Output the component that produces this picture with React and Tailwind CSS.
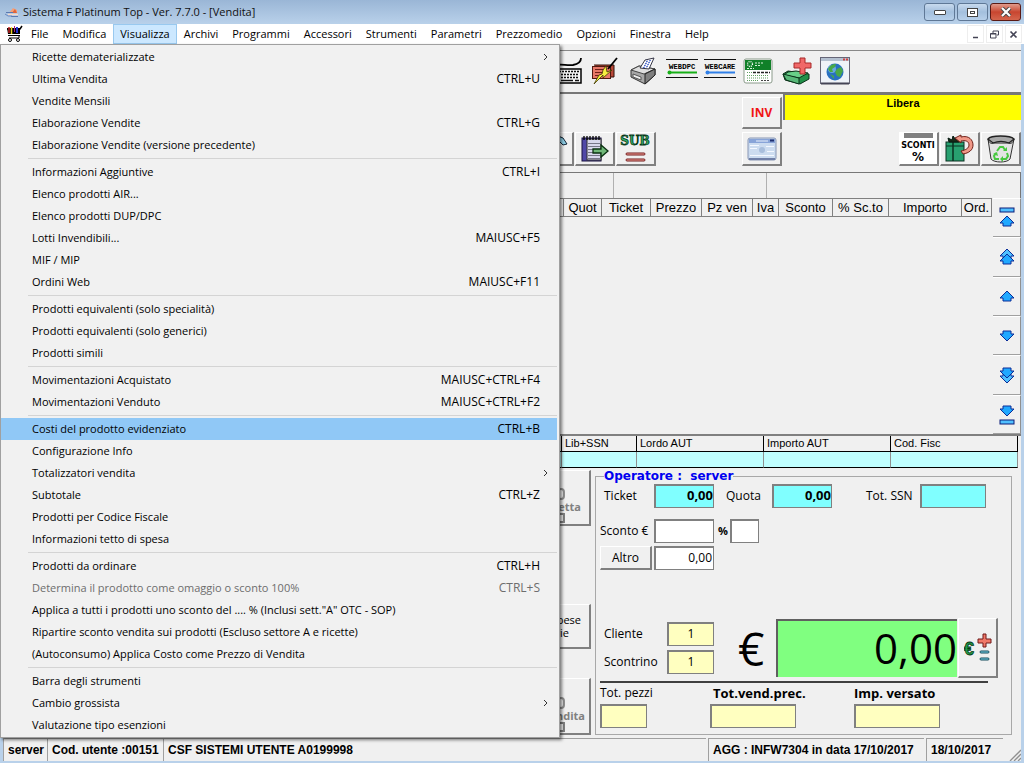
import { useState } from "react";
import clsx from "clsx";

const menuBar = [
    "File", "Modifica", "Visualizza", "Archivi", "Programmi", "Accessori",
    "Strumenti", "Parametri", "Prezzomedio", "Opzioni", "Finestra", "Help",
];

const menuGroups = [
    [
        { label: "Ricette dematerializzate", sub: true },
        { label: "Ultima Vendita", keys: "CTRL+U" },
        { label: "Vendite Mensili" },
        { label: "Elaborazione Vendite", keys: "CTRL+G" },
        { label: "Elaborazione Vendite (versione precedente)" },
    ],
    [
        { label: "Informazioni Aggiuntive", keys: "CTRL+I" },
        { label: "Elenco prodotti AIR..." },
        { label: "Elenco prodotti DUP/DPC" },
        { label: "Lotti Invendibili...", keys: "MAIUSC+F5" },
        { label: "MIF / MIP" },
        { label: "Ordini Web", keys: "MAIUSC+F11" },
    ],
    [
        { label: "Prodotti equivalenti (solo specialità)" },
        { label: "Prodotti equivalenti (solo generici)" },
        { label: "Prodotti simili" },
    ],
    [
        { label: "Movimentazioni Acquistato", keys: "MAIUSC+CTRL+F4" },
        { label: "Movimentazioni Venduto", keys: "MAIUSC+CTRL+F2" },
    ],
    [
        { label: "Costi del prodotto evidenziato", keys: "CTRL+B" },
        { label: "Configurazione Info" },
        { label: "Totalizzatori vendita", sub: true },
        { label: "Subtotale", keys: "CTRL+Z" },
        { label: "Prodotti per Codice Fiscale" },
        { label: "Informazioni tetto di spesa" },
    ],
    [
        { label: "Prodotti da ordinare", keys: "CTRL+H" },
        { label: "Determina il prodotto come omaggio o sconto 100%", keys: "CTRL+S", disabled: true },
        { label: 'Applica a tutti i prodotti uno sconto del .... % (Inclusi sett."A" OTC - SOP)' },
        { label: "Ripartire sconto vendita sui prodotti (Escluso settore A e ricette)" },
        { label: "(Autoconsumo) Applica Costo come Prezzo di Vendita" },
    ],
    [
        { label: "Barra degli strumenti" },
        { label: "Cambio grossista", sub: true },
        { label: "Valutazione tipo esenzioni" },
    ],
];

const saleColumns = [
    { label: "Quot", width: "w-[38px]" },
    { label: "Ticket", width: "w-[49px]" },
    { label: "Prezzo", width: "w-[51px]" },
    { label: "Pz ven", width: "w-[51px]" },
    { label: "Iva", width: "w-[26px]" },
    { label: "Sconto", width: "w-[54px]" },
    { label: "% Sc.to", width: "w-[56px]" },
    { label: "Importo", width: "w-[73px]" },
    { label: "Ord.", width: "w-[30px]" },
];

const raised =
    "border-t border-l border-r-2 border-b-2 border-t-white border-l-white border-r-[#808080] border-b-[#808080] bg-[#f0f0f0]";

/* ==================== ICONS ==================== */

function AppIcon() {
    return (
        <svg width="16" height="16" viewBox="0 0 16 16">
            <path d="M5 9 L9 4 L13 6 L13 9 Z" fill="#f4a078" />
            <path d="M8 9 L11 5 L13 9 Z" fill="#e0643a" />
            <path d="M2 8.500 H9 M7 12.500 H14" stroke="#5a78b0" />
            <path d="M4 10.500 H14" stroke="#f8d8c8" strokeWidth="1.500" />
            <path d="M1 10 L4 12 H8" stroke="#6a88c0" fill="none" />
        </svg>
    );
}

function CartIcon() {
    return (
        <svg width="18" height="18" viewBox="0 0 18 18">
            <path d="M1 4h13l2-3" stroke="#000" fill="none" strokeWidth="1.500" />
            <path d="M1 3h13v6H2z" fill="#000" />
            <path d="M3 2v6" stroke="#c02020" strokeWidth="1.500" />
            <path d="M5.500 2v7" stroke="#f0d020" strokeWidth="1.500" />
            <path d="M8.500 1v6" stroke="#b02080" />
            <path d="M11 2v6" stroke="#2030d0" strokeWidth="2" />
            <path d="M2 10.500h12M3 13h10v-3" stroke="#000" fill="none" />
            <circle cx="4" cy="15" r="1.500" fill="#fff" stroke="#000" />
            <circle cx="12" cy="15" r="1.500" fill="#fff" stroke="#000" />
        </svg>
    );
}

function KeyboardIcon() {
    return (
        <svg width="32" height="28" viewBox="0 0 32 28">
            <path d="M3 11 C6 5 14 9 22 8 C28 7 30 5 30 1" stroke="#000" strokeWidth="1.800" fill="none" />
            <path d="M5 12h25v14H2z" fill="#f4f4f4" stroke="#000" strokeWidth="1.500" />
            <path d="M5 14.500h24M4 17.500h24M4 20.500h24" stroke="#111" strokeWidth="1.500" strokeDasharray="2 1" />
            <path d="M4 23.500h4M10 23.500h12M24 23.500h4" stroke="#111" strokeWidth="1.500" />
        </svg>
    );
}

function PrescriptionPenIcon() {
    return (
        <svg width="28" height="28" viewBox="0 0 28 28">
            <path d="M3 8h20v12h-4" fill="#b84838" stroke="#301008" />
            <rect x="1.500" y="9.500" width="18" height="12" fill="#e87868" stroke="#501810" />
            <path d="M4 12.500h12M4 15.500h8M4 18.500h6" stroke="#702018" />
            <path d="M26 1 L17 12" stroke="#000" strokeWidth="1.800" />
            <path d="M15 9l1 6 5-2-9 8 0-3-9 9 5-9 3-1 1-4z" fill="#f8f040" stroke="#403800" strokeWidth="0.800" />
        </svg>
    );
}

function PrinterIcon() {
    return (
        <svg width="28" height="28" viewBox="0 0 28 28">
            <path d="M2 13l8-4 16 3v6l-10 9L2 20z" fill="#a8a8a8" stroke="#333" />
            <path d="M2 13l13 4 11-5-16-3z" fill="#dedede" stroke="#444" />
            <path d="M16 17v10l10-9v-6z" fill="#808080" stroke="#222" />
            <path d="M11 11l5-8 9-2-5 11z" fill="#fff" stroke="#334" />
            <path d="M17 4.500l5-1M16 6.500l5-1M15 8.500l5-1M14 10.500l5-1" stroke="#3858c8" strokeDasharray="2 1" />
            <path d="M4 17l8 3v3l-8-3z" fill="#f0f0f0" stroke="#555" />
        </svg>
    );
}

function WebIcon({ caps, color }) {
    return (
        <svg width="32" height="24" viewBox="0 0 32 24">
            <path d="M0 2.500h32M0 20.500h32" stroke="#111" />
            <text x="16" y="12" textAnchor="middle" fontSize="8" fontWeight="bold" fontFamily="Liberation Mono, monospace" fill="#000">
                W<tspan fontSize="7">EB</tspan>{caps[0]}<tspan fontSize="7">{caps.slice(1)}</tspan>
            </text>
            <path d="M2 15.500h29" stroke={color} strokeWidth="2" />
            <circle cx="3.500" cy="15.500" r="2" fill={color} />
        </svg>
    );
}

function GreenCardIcon() {
    return (
        <svg width="30" height="26" viewBox="0 0 30 26">
            <rect x="1" y="1" width="28" height="24" rx="2" fill="#fff" stroke="#8a9a8a" />
            <rect x="2" y="2" width="26" height="10" fill="#108028" />
            <circle cx="7" cy="6" r="2.500" fill="none" stroke="#fff" strokeWidth="1.300" strokeDasharray="1 1" />
            <path d="M12 5h9M12 7.500h6M4 10.500h7" stroke="#d8f0d8" strokeDasharray="2 1" />
            <path d="M10 14.500h17" stroke="#222" strokeWidth="1.500" strokeDasharray="3 1" />
            <path d="M4 14.500h5M4 17.500h22M4 20h22M4 22.500h12" stroke="#60a060" strokeDasharray="1 1" />
            <path d="M18 22.500h8" stroke="#444" strokeDasharray="2 1" />
        </svg>
    );
}

function BoxPlusIcon() {
    return (
        <svg width="30" height="28" viewBox="0 0 30 28">
            <path d="M1 17l5-3 21 3 0 5-9 5-15-4z" fill="#209048" stroke="#0a3018" />
            <path d="M2 18l15 3 9-5-12-2-8 1z" fill="#68d088" stroke="#0a3018" />
            <path d="M1 17l3 6 13 4 0-6z" fill="#58b878" stroke="#0a3018" />
            <path d="M18 1h5v5h6v5h-6v6h-5v-6h-6v-5h6z" fill="#f06868" stroke="#a82828" />
        </svg>
    );
}

function GlobeWindowIcon() {
    return (
        <svg width="30" height="28" viewBox="0 0 30 28">
            <rect x="0.500" y="0.500" width="29" height="26" fill="#eef2f8" stroke="#667" />
            <rect x="1" y="1" width="28" height="3" fill="#b4c0d0" />
            <path d="M23 2.500h2M26 2.500h2" stroke="#d04040" strokeWidth="2" />
            <path d="M1 26.500h28" stroke="#445" strokeWidth="2" />
            <circle cx="15" cy="15" r="8.500" fill="#2870c0" />
            <circle cx="12" cy="12" r="4" fill="#80c0f0" opacity="0.700" />
            <path d="M8 12c2-4 5-5 8-5l-1 3-3 2 1 3-3 0zM17 12l4-2 2 4-3 6-3-1-2-4zM10 17l4 2 0 3z" fill="#48a848" />
        </svg>
    );
}

function NotebookIcon() {
    return (
        <svg width="28" height="28" viewBox="0 0 28 28">
            <rect x="1" y="3" width="19" height="23" fill="#5048a8" stroke="#181040" />
            <rect x="6" y="4" width="14" height="21" fill="#d8d8ec" stroke="#333" />
            <path d="M7 8.500h12M7 11.500h12M7 14.500h12M7 17.500h12M7 20.500h12M7 23.500h12" stroke="#778" />
            <path d="M3 1v4M6 1v4M9 1v4M12 1v4M15 1v4M18 1v4" stroke="#000" strokeWidth="1.300" />
            <path d="M12 14h8v-4l7 6-7 6v-4h-8z" fill="#70b878" stroke="#0a3010" strokeWidth="1.300" />
        </svg>
    );
}

function SubtotalIcon() {
    return (
        <svg width="32" height="30" viewBox="0 0 32 30">
            <text x="15" y="11" textAnchor="middle" fontSize="12" fontWeight="bold" fontFamily="DejaVu Serif, serif" fill="#30b068" stroke="#0a3818" strokeWidth="0.800">SUB</text>
            <rect x="6" y="19" width="19" height="2" rx="1" fill="#f8a8a0" stroke="#701818" />
            <rect x="6" y="25" width="19" height="2" rx="1" fill="#f8a8a0" stroke="#701818" />
        </svg>
    );
}

function CardIcon() {
    return (
        <svg width="30" height="24" viewBox="0 0 30 24">
            <rect x="1" y="1" width="28" height="22" rx="2" fill="#ccdcf0" stroke="#8896b4" />
            <rect x="2" y="2" width="26" height="4" fill="#88a4d8" />
            <path d="M9 4h12" stroke="#e8f0fc" />
            <path d="M23 3.500h4" stroke="#203070" strokeWidth="2" />
            <circle cx="15" cy="13" r="3" fill="#a8bedc" />
            <path d="M3 8.500h9M3 11.500h7M19 9.500h8M20 14.500h7M3 18.500h24" stroke="#f4f8ff" />
            <path d="M2 22h26" stroke="#7080a8" strokeWidth="2" />
        </svg>
    );
}

function DiscountIcon() {
    return (
        <svg width="37" height="31" viewBox="0 0 37 31">
            <rect width="37" height="31" fill="#fff" />
            <rect x="4" y="0" width="29" height="5" fill="#808080" />
            <text x="18" y="15" textAnchor="middle" fontSize="8" fontWeight="bold" fontFamily="DejaVu Sans, sans-serif">SCONTI</text>
            <text x="18" y="28" textAnchor="middle" fontSize="12" fontWeight="bold" fontFamily="DejaVu Sans, sans-serif">%</text>
        </svg>
    );
}

function GiftIcon() {
    return (
        <svg width="30" height="29" viewBox="0 0 30 29">
            <rect x="1" y="8" width="18" height="19" fill="#28a070" stroke="#0a3020" />
            <path d="M1 12h18" stroke="#0a3020" />
            <path d="M8 8v19" stroke="#0a3020" strokeWidth="1.500" />
            <path d="M4 8l-1-4 4 2 1-4 3 4 4-2-1 4z" fill="#182818" stroke="#041810" />
            <path d="M10 4l6-3v2c8-2 12 3 12 8 0 5-4 8-10 9l-2-3c5-1 8-3 8-6 0-4-4-5-8-4v2z" fill="#f09888" stroke="#702018" />
        </svg>
    );
}

function RecycleBinIcon() {
    return (
        <svg width="30" height="30" viewBox="0 0 30 30">
            <path d="M2 5l3 20c3 4 16 4 19 0l4-20z" fill="#e4e4e4" stroke="#333" />
            <path d="M2 5c3-4 22-4 26 0l-5 4c-5-2-11-2-16 0z" fill="#a8a8a8" stroke="#222" strokeWidth="1.300" />
            <path d="M2 5c1 5 5 5 5 4M28 5c-1 5-5 5-5 4M7 9h16" fill="none" stroke="#222" />
            <path d="M11 17l3-4h3l2 3M21 19l1 3-2 3h-3M13 25h-4l-1-3 2-3" fill="none" stroke="#48c840" strokeWidth="2" />
            <path d="M17 17h4v-4zM17 22l-3 3 3 3zM7 20l4-2 1 4z" fill="#48c840" />
        </svg>
    );
}

function EuroPlusIcon() {
    return (
        <svg width="28" height="30" viewBox="0 0 28 30">
            <text x="0" y="22" fontSize="18" fontWeight="bold" fontFamily="Liberation Sans, sans-serif" fill="#20a048" stroke="#0a3818" strokeWidth="0.800">€</text>
            <path d="M19 1h3v5h5v4h-5v4h-3v-4h-5v-4h5z" fill="#f07868" stroke="#701818" />
            <rect x="16" y="18" width="9" height="2" rx="1" fill="#80d8f0" stroke="#104858" />
            <rect x="16" y="25" width="9" height="2" rx="1" fill="#80d8f0" stroke="#104858" />
        </svg>
    );
}

function ArrowIcon({ double, bar, down }) {
    const head = "M8 0 L15 7 H12 V10 H4 V7 H1 Z";
    return (
        <svg width="18" height="22" viewBox="-1 -1 18 22" className={clsx(down && "rotate-180")}>
            {bar && <rect x="1" y="0" width="14" height="4" fill="#50c0ff" stroke="#0a1c78" />}
            {double && <path d={head} fill="#50c0ff" stroke="#0a2c98" transform="translate(0 2)" />}
            <path d={head} fill="#20a8ff" stroke="#0a2c98" transform={bar ? "translate(0 8)" : double ? "translate(0 7)" : "translate(0 5)"} />
        </svg>
    );
}

/* ==================== PIECES ==================== */

function IconButton({ label, className, children }) {
    return (
        <button aria-label={label} className={clsx("flex items-center justify-center overflow-hidden", className)}>
            {children}
        </button>
    );
}

function Field({ id, label, labelClass, className, value = "" }) {
    return (
        <>
            <label htmlFor={id} className={clsx("shrink-0 whitespace-nowrap", labelClass)}>{label}</label>
            <input
                id={id}
                defaultValue={value}
                className={clsx("h-6 min-w-0 shrink-0 border border-t-2 border-l-2 border-[#808080] outline-none", className)}
            />
        </>
    );
}

function TitleBar() {
    const winButton =
        "flex h-[18px] w-[31px] items-center justify-center rounded-[3px] border border-[#5f7896] bg-linear-to-b from-[#c8daee] via-[#a3bfdd] to-[#b7d0ea]";
    return (
        <header className="flex h-6 items-center bg-linear-to-b from-[#9ab6d6] to-[#b9d1ea] pl-1 pr-[3px]">
            <AppIcon />
            <h1 className="ml-[3px] flex-1 text-[11px] text-[#111]">Sistema F Platinum Top - Ver. 7.7.0 - [Vendita]</h1>
            <div className="flex gap-[2px]">
                <button aria-label="Riduci a icona" className={winButton}>
                    <span className="h-[5px] w-3 rounded-[1px] border border-[#444] bg-white" />
                </button>
                <button aria-label="Ingrandisci" className={winButton}>
                    <span className="flex h-[9px] w-[11px] items-center justify-center border border-[#444] bg-white">
                        <span className="h-[3px] w-[5px] border border-[#444]" />
                    </span>
                </button>
                <button
                    aria-label="Chiudi"
                    className="flex h-[18px] w-[31px] items-center justify-center rounded-[3px] border border-[#5a1a14] bg-linear-to-b from-[#e09a8c] via-[#c8452f] to-[#d4654d]"
                >
                    <svg width="12" height="10" viewBox="0 0 12 10">
                        <path d="M2 1l8 8M10 1l-8 8" stroke="#444" strokeWidth="4" />
                        <path d="M2 1l8 8M10 1l-8 8" stroke="#fff" strokeWidth="2.200" />
                    </svg>
                </button>
            </div>
        </header>
    );
}

function DropDown() {
    return (
        <div className="absolute left-0 top-full z-20 w-[560px] border border-[#a0a0a0] bg-[#f1f1f1] py-px pr-[2px] shadow-[2px_2px_3px_rgba(0,0,0,0.5)]">
            {menuGroups.map((group, i) => (
                <div key={i}>
                    {i > 0 && (
                        <div className="flex h-[5px] items-center pl-[27px]">
                            <div className="h-px flex-1 bg-[#d4d4d4]" />
                        </div>
                    )}
                    {group.map((item) => (
                        <button
                            key={item.label}
                            disabled={item.disabled}
                            className={clsx(
                                "flex h-[22px] w-full items-center pl-[31px] text-left text-[11px]",
                                item.sub ? "pr-2" : "pr-[17px]",
                                item.label === "Costi del prodotto evidenziato" && "bg-[#90c8f6]",
                                item.disabled && "text-[#6d6d6d]"
                            )}
                        >
                            <span className="flex-1">{item.label}</span>
                            {item.keys && <span className="text-xs">{item.keys}</span>}
                            {item.sub && (
                                <svg width="6" height="8" viewBox="0 0 6 8">
                                    <path d="M1 1l3 3-3 3" fill="none" stroke="#333" />
                                </svg>
                            )}
                        </button>
                    ))}
                </div>
            ))}
        </div>
    );
}

function MenuBar() {
    const [open, setOpen] = useState("Visualizza");
    const winButton = "flex h-[18px] w-[17px] items-center justify-center border border-[#eee]";

    return (
        <nav className="relative flex h-5 items-center bg-white pl-[6px] text-[11px]">
            <CartIcon />
            {menuBar.map((name) => (
                <button
                    key={name}
                    onClick={() => setOpen(open === name ? "" : name)}
                    className={clsx(
                        "h-5 border px-[6px]",
                        open === name ? "border-[#99c9ef] bg-[#cce8ff]" : "border-transparent"
                    )}
                >
                    {name}
                </button>
            ))}
            <div className="ml-auto flex gap-[2px] pr-[2px] text-[#445]">
                <button aria-label="Riduci finestra" className={winButton}>
                    <svg width="9" height="9" viewBox="0 0 9 9"><path d="M2 7.500h5" stroke="currentColor" strokeWidth="1.500" /></svg>
                </button>
                <button aria-label="Ripristina finestra" className={winButton}>
                    <svg width="9" height="9" viewBox="0 0 9 9">
                        <path d="M3 3V1h5.500v4H7M0.500 3.500h5.500v4.500H0.500z" fill="none" stroke="currentColor" />
                        <path d="M0.500 4h5.500" stroke="currentColor" />
                    </svg>
                </button>
                <button aria-label="Chiudi finestra" className={winButton}>
                    <svg width="9" height="9" viewBox="0 0 9 9"><path d="M1.500 1.500l6 6M7.500 1.500l-6 6" stroke="currentColor" strokeWidth="1.700" /></svg>
                </button>
            </div>
            {open === "Visualizza" && <DropDown />}
        </nav>
    );
}

function Toolbar() {
    return (
        <div className="mt-[6px] flex h-[44px] items-center border-t border-b-2 border-t-[#888] border-b-[#777] pb-px pl-[545px]">
            <IconButton label="Tastiera" className="w-[38px]"><KeyboardIcon /></IconButton>
            <IconButton label="Ricetta" className="w-[38px]"><PrescriptionPenIcon /></IconButton>
            <IconButton label="Stampa" className="w-[38px]"><PrinterIcon /></IconButton>
            <IconButton label="WebDpc" className="w-[39px] pb-1"><WebIcon caps="DPC" color="#18b018" /></IconButton>
            <IconButton label="WebCare" className="w-[38px] pb-1"><WebIcon caps="CARE" color="#3080e8" /></IconButton>
            <IconButton label="Tessera" className="w-[38px]"><GreenCardIcon /></IconButton>
            <IconButton label="Aggiungi" className="w-[39px]"><BoxPlusIcon /></IconButton>
            <IconButton label="Web" className="w-[38px]"><GlobeWindowIcon /></IconButton>
        </div>
    );
}

function SaleHeader() {
    const tool = `h-[34px] w-10 shrink-0 ${raised}`;
    return (
        <div>
            <div className="flex items-start justify-end">
                <button className={`mt-[3px] h-8 w-10 text-xs font-bold text-[#f01414] ${raised}`}>INV</button>
                <div className="ml-px h-[26px] w-[238px] border-l-2 border-t border-[#777] bg-[#ffff00] text-center font-['Liberation_Sans',sans-serif] text-[11px] leading-4 font-bold">
                    Libera
                </div>
            </div>
            <div className="mt-[3px] flex gap-px pl-[531px]">
                <IconButton label="Cerca" className={tool}>
                    <svg width="28" height="28" viewBox="0 0 28 28">
                        <path d="M12 4l6-3 5 2 4 6-4 1-4-4-6 1z" fill="#90d0e8" stroke="#123" />
                    </svg>
                </IconButton>
                <IconButton label="Esporta" className={tool}><NotebookIcon /></IconButton>
                <IconButton label="Subtotale" className={tool}><SubtotalIcon /></IconButton>
                <IconButton label="Tessera cliente" className={`ml-[85px] ${tool}`}><CardIcon /></IconButton>
                <IconButton label="Sconti" className={`ml-auto ${tool}`}><DiscountIcon /></IconButton>
                <IconButton label="Omaggio" className={tool}><GiftIcon /></IconButton>
                <IconButton label="Cestino" className={tool}><RecycleBinIcon /></IconButton>
            </div>
            <div className="mt-[6px] flex h-[26px] border border-b-0 border-[#777]">
                <div className="w-[610px] border-r border-[#b0b0b0]" />
                <div className="w-[153px] border-r border-[#b0b0b0]" />
                <div className="flex-1" />
            </div>
        </div>
    );
}

function SaleTable() {
    const arrow = "min-h-[39px] flex-1 border-r border-b border-t border-r-[#909090] border-b-[#a0a0a0] border-t-white";
    return (
        <div className="flex flex-1 border-b-2 border-[#808080]">
            <div className="flex-1">
                <table className="w-full table-fixed border-collapse font-['Liberation_Sans',sans-serif] text-[13px] leading-4">
                    <thead>
                        <tr>
                            <th className="border border-[#808080] font-normal" />
                            {saleColumns.map((col) => (
                                <th key={col.label} className={clsx("h-[18px] border border-[#808080] p-0 font-normal whitespace-nowrap", col.width)}>
                                    {col.label}
                                </th>
                            ))}
                        </tr>
                    </thead>
                </table>
            </div>
            <div className="ml-px flex w-7 flex-col">
                <IconButton label="Inizio" className={arrow}><ArrowIcon bar /></IconButton>
                <IconButton label="Pagina su" className={arrow}><ArrowIcon double /></IconButton>
                <IconButton label="Su" className={arrow}><ArrowIcon /></IconButton>
                <IconButton label="Giù" className={arrow}><ArrowIcon down /></IconButton>
                <IconButton label="Pagina giù" className={arrow}><ArrowIcon double down /></IconButton>
                <IconButton label="Fine" className={arrow}><ArrowIcon bar down /></IconButton>
            </div>
        </div>
    );
}

function SsnTable() {
    const head = "border-r border-b border-black p-0 pl-[3px] text-left font-normal";
    const cell = "h-4 border-r border-b border-black border-r-[#909090] bg-[#c0ffff]";
    return (
        <div className="pr-[3px]">
            <table className="w-full table-fixed border-separate border-spacing-0 font-['Liberation_Sans',sans-serif] text-[11px] leading-[15px]">
                <thead>
                    <tr>
                        <th className={head} />
                        <th className={clsx(head, "w-[75px]")}>Lib+SSN</th>
                        <th className={clsx(head, "w-[127px]")}>Lordo AUT</th>
                        <th className={clsx(head, "w-[127px]")}>Importo AUT</th>
                        <th className={clsx(head, "w-[127px]")}>Cod. Fisc</th>
                    </tr>
                </thead>
                <tbody>
                    <tr>
                        <td className={cell} />
                        <td className={cell} />
                        <td className={cell} />
                        <td className={cell} />
                        <td className={cell} />
                    </tr>
                </tbody>
            </table>
        </div>
    );
}

function SideButtons() {
    const button = "flex w-16 flex-col items-end";
    return (
        <div className="flex w-[588px] shrink-0 flex-col items-end pt-[2px] text-[11px] leading-[13px]">
            <button disabled className={`${button} h-14 justify-end pr-2 font-bold text-[#808080] ${raised}`}>
                <span className="mr-4 h-3 w-2 rounded-full border-2 border-[#909090]" />
                Ricetta
                <span className="mr-4 mb-px h-[10px] w-2 border-2 border-[#808080]" />
            </button>
            <button className={`${button} mt-[78px] h-[45px] justify-center pr-2 ${raised}`}>
                <span>Spese</span>
                <span className="pr-3">varie</span>
            </button>
            <button disabled className={`${button} mt-[29px] h-[57px] justify-end pr-1 font-bold text-[#808080] ${raised}`}>
                <span className="mr-5 h-3 w-2 rounded-full border-2 border-[#909090]" />
                Vendita
                <span className="mr-5 mb-px h-[10px] w-2 border-2 border-[#808080]" />
            </button>
        </div>
    );
}

function OperatorPanel() {
    return (
        <fieldset className="mr-[9px] ml-1 flex-1 border border-[#a8a8a8] px-1 pb-px text-xs">
            <legend className="ml-1 font-['DejaVu_Sans',sans-serif] text-xs leading-4 font-bold whitespace-pre text-[#0000f0]">
                {"Operatore :  server"}
            </legend>

            <div className="flex items-center">
                <Field id="ticket" label="Ticket" labelClass="w-[54px] pl-1" value="0,00" className="w-[60px] bg-[#80ffff] pb-1 text-right text-[13px] font-bold" />
                <Field id="quota" label="Quota" labelClass="ml-3 w-[46px]" value="0,00" className="w-[60px] bg-[#80ffff] pb-1 text-right text-[13px] font-bold" />
                <Field id="ssn" label="Tot. SSN" labelClass="ml-[34px] w-[54px]" className="w-[66px] bg-[#80ffff]" />
            </div>

            <div className="mt-[11px] flex items-center">
                <Field id="sconto" label="Sconto €" labelClass="w-[54px]" className="w-[60px] bg-white" />
                <Field id="perc" label="%" labelClass="w-4 pl-1 text-[11px] font-bold" className="w-[29px] bg-white" />
            </div>

            <div className="mt-[3px] flex items-center">
                <button className={`mr-[2px] h-6 w-[52px] ${raised}`}>Altro</button>
                <input aria-label="Altro sconto" defaultValue="0,00" className="h-6 w-[60px] border border-t-2 border-l-2 border-[#808080] bg-white px-px pb-[2px] text-right" />
            </div>

            <div className="mt-12 flex items-center pr-[9px]">
                <div className="flex flex-col gap-1">
                    <div className="flex items-center">
                        <Field id="cliente" label="Cliente" labelClass="w-[67px] pl-1" value="1" className="w-[47px] bg-[#ffffc0] pb-[2px] text-center" />
                    </div>
                    <div className="flex items-center">
                        <Field id="scontrino" label="Scontrino" labelClass="w-[67px] pl-1" value="1" className="w-[47px] bg-[#ffffc0] pb-[2px] text-center" />
                    </div>
                </div>
                <label htmlFor="totale" className="w-[62px] shrink-0 pl-6 text-[46px] leading-[56px]">€</label>
                <input
                    id="totale"
                    defaultValue="0,00"
                    className="h-[58px] w-0 flex-1 border-t-2 border-l-2 border-[#606060] bg-[#80ff80] pb-1 text-right text-[42px] outline-none"
                />
                <IconButton label="Totale" className={`ml-px h-[60px] w-10 ${raised}`}><EuroPlusIcon /></IconButton>
            </div>

            <div className="mt-[3px] mr-[19px] h-[2px] bg-[#404040]" />

            <div className="mt-[2px] flex leading-4">
                <div className="flex w-[110px] flex-col gap-[3px]">
                    <Field id="pezzi" label="Tot. pezzi" className="w-[47px] bg-[#ffffc0]" />
                </div>
                <div className="flex w-[144px] flex-col gap-[3px]">
                    <Field id="prec" label="Tot.vend.prec." labelClass="pl-[3px] text-[13px] leading-4 font-bold" className="w-[86px] bg-[#ffffc0]" />
                </div>
                <div className="flex flex-col gap-[3px]">
                    <Field id="versato" label="Imp. versato" labelClass="text-[13px] leading-4 font-bold" className="w-[86px] bg-[#ffffc0]" />
                </div>
            </div>
        </fieldset>
    );
}

function StatusBar() {
    const cell = "border-t border-l border-[#a0a0a0] px-1";
    return (
        <footer className="mt-[3px] flex h-[23px] font-['Liberation_Sans',sans-serif] text-xs leading-[22px] font-bold whitespace-nowrap">
            <div className={clsx(cell, "w-[44px]")}>server</div>
            <div className={clsx(cell, "w-[116px]")}>Cod. utente :00151</div>
            <div className={clsx(cell, "flex-1")}>CSF SISTEMI UTENTE A0199998</div>
            <div className={clsx(cell, "ml-[2px] w-[216px]")}>AGG : INFW7304 in data 17/10/2017</div>
            <div className={clsx(cell, "ml-[2px] w-[77px]")}>18/10/2017</div>
            <div className="flex w-[18px] items-end justify-end">
                <svg width="12" height="12" viewBox="0 0 12 12">
                    <path d="M1 12L12 1M5 12l7-7M9 12l3-3" stroke="#909090" strokeWidth="1.300" />
                </svg>
            </div>
        </footer>
    );
}

export default function App() {
    return (
        <div className="flex min-h-screen flex-col bg-[#f0f0f0] font-['Open_Sans',sans-serif] text-xs text-black">
            <TitleBar />
            <MenuBar />
            <main className="flex flex-1 flex-col border-r-[3px] border-b-2 border-l-[3px] border-[#b9d1ea]">
                <Toolbar />
                <SaleHeader />
                <SaleTable />
                <SsnTable />
                <div className="flex">
                    <SideButtons />
                    <OperatorPanel />
                </div>
                <StatusBar />
            </main>
        </div>
    );
}
